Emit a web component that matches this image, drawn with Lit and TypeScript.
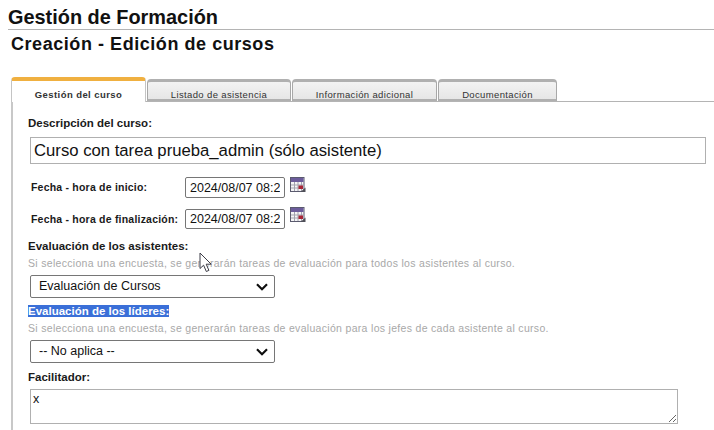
import { LitElement, html, css, svg } from "lit";
import { customElement } from "lit/decorators.js";

const calendar = (cls: string) => svg`<svg width="16" height="16" viewBox="0 0 16 16" class="cal ${cls}">
  <rect x="0.5" y="0.5" width="13.5" height="14" fill="#f4f4f6" stroke="#5a5a6e"/>
  <rect x="1" y="1" width="12.5" height="4" fill="#6c5c9c"/>
  <path d="M1 8h13M1 11h13M4.5 5v9M8 5v9M11.5 5v9" stroke="#a2a2ae" stroke-width="1" fill="none"/>
  <rect x="8.5" y="8.5" width="4.5" height="3.5" fill="#a82436"/>
  <path d="M10.5 15l5-4.5v4.5z" fill="#4f4f58"/>
</svg>`;

const pointer = svg`<svg class="pointer" width="14" height="21" viewBox="0 0 14 21">
  <path d="M1 1v15.5l3.6-3.3 2.7 6.3 2.6-1.1-2.7-6.2h5z" fill="#fff" stroke="#3c3c46" stroke-width="1" stroke-linejoin="round"/>
</svg>`;

const chevron =
  "url(\"data:image/svg+xml,%3Csvg xmlns='http://www.w3.org/2000/svg' width='12' height='8' viewBox='0 0 12 8'%3E%3Cpath d='M1 1.2L6 6.2l5-5' fill='none' stroke='%23111' stroke-width='2.2'/%3E%3C/svg%3E\")";

@customElement("app-root")
export class AppRoot extends LitElement {
  static styles = css`
    :host {
      display: block;
      position: relative;
      width: 714px;
      height: 430px;
      overflow: hidden;
      background: #fff;
      font-family: "Liberation Sans", Arial, sans-serif;
      color: #111;
    }
    .title {
      margin: 0 0 0 8px;
      height: 30px;
      box-sizing: border-box;
      padding-top: 6px;
      font-size: 19.9px;
      line-height: 22px;
      font-weight: bold;
      border-bottom: 1px solid #b4b4b4;
    }
    .subtitle {
      margin: 0 0 0 11px;
      height: 47px;
      font-size: 18px;
      line-height: 28px;
      font-weight: bold;
      letter-spacing: 0.55px;
    }
    .tabs {
      display: flex;
      align-items: flex-end;
      height: 24px;
      margin-left: 11px;
      gap: 1px;
      border-bottom: 1px solid #b4b4b4;
    }
    .tab {
      box-sizing: border-box;
      height: 22px;
      background: linear-gradient(#f3f3f3, #e6e6e6);
      border: 1px solid #a8a8a8;
      border-top: 3px solid #b0b0b0;
      border-bottom: 2px solid #b0b0b0;
      border-radius: 4px 4px 0 0;
      font-size: 9.5px;
      letter-spacing: 0.36px;
      text-align: center;
      line-height: 25px;
      color: #333;
    }
    .tab.active {
      height: 25px;
      margin-bottom: -1px;
      background: #fff;
      border: 1px solid #c4c4c4;
      border-top: 4px solid #f0b040;
      border-bottom: none;
      font-weight: bold;
      letter-spacing: 0.42px;
      line-height: 27px;
    }
    .panel {
      margin-left: 11px;
      border-left: 2px solid #c8c8c8;
      padding: 0 8px 0 15px;
      height: 329px;
      box-sizing: border-box;
      display: flex;
      flex-direction: column;
    }
    .label {
      font-size: 11.5px;
      line-height: 14px;
      font-weight: bold;
      color: #1a1a1a;
    }
    .desc-label { margin-top: 14px; }
    input, select, textarea {
      font-family: "Liberation Sans", Arial, sans-serif;
      box-sizing: border-box;
      color: #111;
      background: #fff;
      outline: none;
    }
    .desc {
      margin: 7px 0 0 2px;
      width: 676px;
      height: 27px;
      border: 1px solid #b0b0b0;
      padding: 0 3px;
      font-size: 16.7px;
    }
    .date-row {
      display: flex;
      align-items: center;
      margin-left: 3px;
    }
    .date-row.first { margin-top: 13px; height: 21px; }
    .date-row.second { margin-top: 11px; height: 20px; }
    .date-label {
      font-size: 10.5px;
      font-weight: bold;
      letter-spacing: 0.21px;
      width: 154px;
      flex: none;
      color: #1a1a1a;
      margin-top: -1px;
    }
    .date-input {
      width: 100px;
      height: 100%;
      border: 1px solid #767676;
      border-radius: 2px;
      padding: 0 4px;
      font-size: 12.5px;
      flex: none;
    }
    .cal { margin-left: 5px; flex: none; align-self: flex-start; }
    .cal.up1 { margin-top: 0; }
    .cal.up2 { margin-top: -2px; }
    .hint {
      font-size: 10.5px;
      line-height: 12px;
      color: #a8a8a8;
      letter-spacing: 0.31px;
      margin-top: 4px;
    }
    .eval-label { margin-top: 10px; }
    select {
      appearance: none;
      -webkit-appearance: none;
      margin: 6px 0 0 2px;
      width: 245px;
      height: 23px;
      border: 1px solid #767676;
      border-radius: 2px;
      padding: 0 0 2px 8px;
      font-size: 12.5px;
      background: #fff ${css([chevron] as unknown as TemplateStringsArray)} no-repeat right 6px center;
    }
    mark {
      background: #3a6fd8;
      color: #fff;
    }
    .leaders { margin-top: 6px; }
    .fac { margin-top: 7px; }
    textarea {
      margin: 5px 0 0 2px;
      width: 648px;
      height: 35px;
      border: 1px solid #b0b0b0;
      padding: 2px;
      font-size: 12.5px;
      flex: none;
    }
    .pointer {
      position: absolute;
      left: 199px;
      top: 252px;
    }
  `;

  render() {
    return html`
      <div class="title">Gestión de Formación</div>
      <div class="subtitle">Creación - Edición de cursos</div>
      <div class="tabs">
        <div class="tab active" style="width:135px">Gestión del curso</div>
        <div class="tab" style="width:144px">Listado de asistencia</div>
        <div class="tab" style="width:145px">Información adicional</div>
        <div class="tab" style="width:119px">Documentación</div>
      </div>
      <div class="panel">
        <div class="label desc-label">Descripción del curso:</div>
        <input class="desc" .value=${"Curso con tarea prueba_admin (sólo asistente)"} />
        <div class="date-row first">
          <span class="date-label">Fecha - hora de inicio:</span>
          <input class="date-input" .value=${"2024/08/07 08:29"} />
          ${calendar("up1")}
        </div>
        <div class="date-row second">
          <span class="date-label">Fecha - hora de finalización:</span>
          <input class="date-input" .value=${"2024/08/07 08:29"} />
          ${calendar("up2")}
        </div>
        <div class="label eval-label">Evaluación de los asistentes:</div>
        <div class="hint">Si selecciona una encuesta, se generarán tareas de evaluación para todos los asistentes al curso.</div>
        <select><option>Evaluación de Cursos</option></select>
        <div class="label leaders"><mark>Evaluación de los líderes:</mark></div>
        <div class="hint">Si selecciona una encuesta, se generarán tareas de evaluación para los jefes de cada asistente al curso.</div>
        <select><option>-- No aplica --</option></select>
        <div class="label fac">Facilitador:</div>
        <textarea .value=${"x"}></textarea>
      </div>
      ${pointer}
    `;
  }
}
